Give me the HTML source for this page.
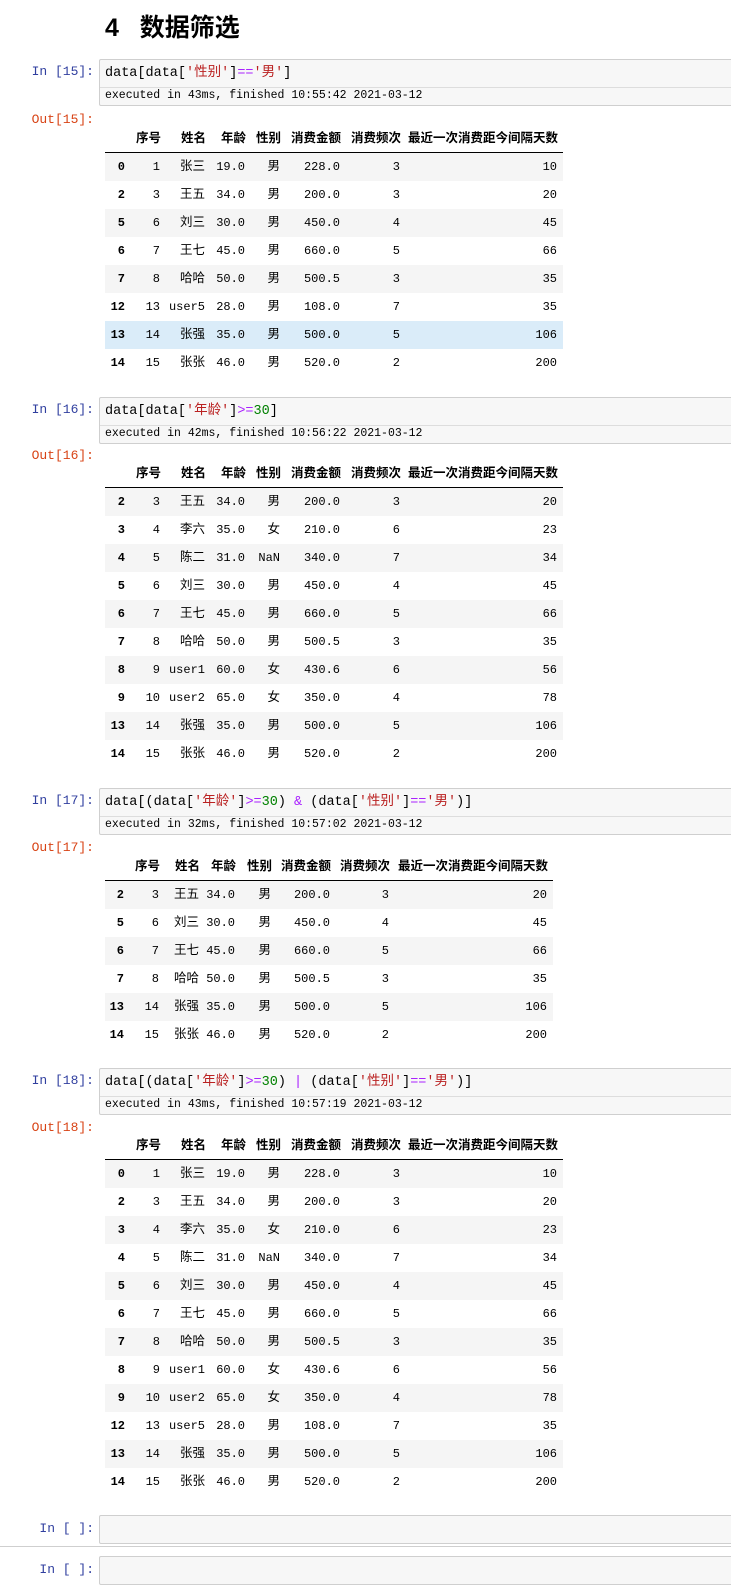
<!DOCTYPE html>
<html><head><meta charset="utf-8"><style>
body{margin:0;width:731px;height:1571px;background:#fff;position:relative;overflow:hidden;font-family:"Liberation Sans","Noto Sans CJK SC",sans-serif;}
.h{position:absolute;left:105px;top:8px;font-size:25px;font-weight:bold;color:#000;font-family:"Liberation Sans","Noto Sans CJK SC",sans-serif;}
.lab{position:absolute;left:0;width:94px;text-align:right;font-family:"Liberation Mono","Noto Sans CJK SC",monospace;font-size:13px;}
.in{color:#303f9f}.out{color:#d84315}
.box{position:absolute;left:99px;width:640px;border:1px solid #cfcfcf;background:#f7f7f7;border-radius:2px;}
.code{height:27px;line-height:27px;padding-left:5px;font-family:"Liberation Mono","Noto Sans CJK SC",monospace;font-size:13.5px;color:#000;border-bottom:1px solid #ddd;white-space:pre}
.ex{height:17px;line-height:16px;padding-left:5px;font-family:"Liberation Mono",monospace;font-size:11.5px;color:#000;white-space:pre}
.s{color:#ba2121}.o{color:#aa22ff}.n{color:#008000}
table{position:absolute;left:105px;border-collapse:collapse;table-layout:fixed;font-size:12px;}
th{height:28px;line-height:16px;font-weight:bold;text-align:right;padding:0 5px 0 0;border-bottom:1px solid #000;white-space:nowrap;font-size:12.5px;vertical-align:middle;overflow:visible}
td{height:28px;line-height:16px;text-align:right;padding:0 6px 0 0;font-family:"Liberation Mono","Noto Sans CJK SC",monospace;font-size:12px;white-space:nowrap;vertical-align:middle}
td.c{font-family:"Noto Sans CJK SC",sans-serif;font-size:12.5px;line-height:16px;padding-bottom:5px;box-sizing:border-box}
td.i{font-weight:bold}
tr.z td{background:#f5f5f5}
tr.hl td{background:#daecf9}
.sep{position:absolute;left:0;width:731px;top:1546px;height:1px;background:#cfcfcf}
</style></head><body>
<div class="h">4&nbsp;&nbsp;&nbsp;数据筛选</div>

<div class="lab in" style="top:64px">In [15]:</div>
<div class="box" style="top:59px"><div class="code">data[data[<span class="s">'性别'</span>]<span class="o">==</span><span class="s">'男'</span>]</div><div class="ex">executed in 43ms, finished 10:55:42 2021-03-12</div></div>
<div class="lab out" style="top:112px">Out[15]:</div>
<table style="top:124px"><colgroup><col style="width:26px"><col style="width:35px"><col style="width:45px"><col style="width:40px"><col style="width:35px"><col style="width:60px"><col style="width:60px"><col style="width:157px"></colgroup>
<tr><th></th><th>序号</th><th>姓名</th><th>年龄</th><th>性别</th><th>消费金额</th><th>消费频次</th><th>最近一次消费距今间隔天数</th></tr>
<tr class="z"><td class="i">0</td><td>1</td><td class="c">张三</td><td>19.0</td><td class="c">男</td><td>228.0</td><td>3</td><td>10</td></tr>
<tr><td class="i">2</td><td>3</td><td class="c">王五</td><td>34.0</td><td class="c">男</td><td>200.0</td><td>3</td><td>20</td></tr>
<tr class="z"><td class="i">5</td><td>6</td><td class="c">刘三</td><td>30.0</td><td class="c">男</td><td>450.0</td><td>4</td><td>45</td></tr>
<tr><td class="i">6</td><td>7</td><td class="c">王七</td><td>45.0</td><td class="c">男</td><td>660.0</td><td>5</td><td>66</td></tr>
<tr class="z"><td class="i">7</td><td>8</td><td class="c">哈哈</td><td>50.0</td><td class="c">男</td><td>500.5</td><td>3</td><td>35</td></tr>
<tr><td class="i">12</td><td>13</td><td>user5</td><td>28.0</td><td class="c">男</td><td>108.0</td><td>7</td><td>35</td></tr>
<tr class="hl"><td class="i">13</td><td>14</td><td class="c">张强</td><td>35.0</td><td class="c">男</td><td>500.0</td><td>5</td><td>106</td></tr>
<tr><td class="i">14</td><td>15</td><td class="c">张张</td><td>46.0</td><td class="c">男</td><td>520.0</td><td>2</td><td>200</td></tr>
</table>

<div class="lab in" style="top:402px">In [16]:</div>
<div class="box" style="top:397px"><div class="code">data[data[<span class="s">'年龄'</span>]<span class="o">&gt;=</span><span class="n">30</span>]</div><div class="ex">executed in 42ms, finished 10:56:22 2021-03-12</div></div>
<div class="lab out" style="top:448px">Out[16]:</div>
<table style="top:459px"><colgroup><col style="width:26px"><col style="width:35px"><col style="width:45px"><col style="width:40px"><col style="width:35px"><col style="width:60px"><col style="width:60px"><col style="width:157px"></colgroup>
<tr><th></th><th>序号</th><th>姓名</th><th>年龄</th><th>性别</th><th>消费金额</th><th>消费频次</th><th>最近一次消费距今间隔天数</th></tr>
<tr class="z"><td class="i">2</td><td>3</td><td class="c">王五</td><td>34.0</td><td class="c">男</td><td>200.0</td><td>3</td><td>20</td></tr>
<tr><td class="i">3</td><td>4</td><td class="c">李六</td><td>35.0</td><td class="c">女</td><td>210.0</td><td>6</td><td>23</td></tr>
<tr class="z"><td class="i">4</td><td>5</td><td class="c">陈二</td><td>31.0</td><td>NaN</td><td>340.0</td><td>7</td><td>34</td></tr>
<tr><td class="i">5</td><td>6</td><td class="c">刘三</td><td>30.0</td><td class="c">男</td><td>450.0</td><td>4</td><td>45</td></tr>
<tr class="z"><td class="i">6</td><td>7</td><td class="c">王七</td><td>45.0</td><td class="c">男</td><td>660.0</td><td>5</td><td>66</td></tr>
<tr><td class="i">7</td><td>8</td><td class="c">哈哈</td><td>50.0</td><td class="c">男</td><td>500.5</td><td>3</td><td>35</td></tr>
<tr class="z"><td class="i">8</td><td>9</td><td>user1</td><td>60.0</td><td class="c">女</td><td>430.6</td><td>6</td><td>56</td></tr>
<tr><td class="i">9</td><td>10</td><td>user2</td><td>65.0</td><td class="c">女</td><td>350.0</td><td>4</td><td>78</td></tr>
<tr class="z"><td class="i">13</td><td>14</td><td class="c">张强</td><td>35.0</td><td class="c">男</td><td>500.0</td><td>5</td><td>106</td></tr>
<tr><td class="i">14</td><td>15</td><td class="c">张张</td><td>46.0</td><td class="c">男</td><td>520.0</td><td>2</td><td>200</td></tr>
</table>

<div class="lab in" style="top:793px">In [17]:</div>
<div class="box" style="top:788px"><div class="code">data[(data[<span class="s">'年龄'</span>]<span class="o">&gt;=</span><span class="n">30</span>) <span class="o">&amp;</span> (data[<span class="s">'性别'</span>]<span class="o">==</span><span class="s">'男'</span>)]</div><div class="ex">executed in 32ms, finished 10:57:02 2021-03-12</div></div>
<div class="lab out" style="top:840px">Out[17]:</div>
<table style="top:852px"><colgroup><col style="width:25px"><col style="width:35px"><col style="width:40px"><col style="width:36px"><col style="width:36px"><col style="width:59px"><col style="width:59px"><col style="width:158px"></colgroup>
<tr><th></th><th>序号</th><th>姓名</th><th>年龄</th><th>性别</th><th>消费金额</th><th>消费频次</th><th>最近一次消费距今间隔天数</th></tr>
<tr class="z"><td class="i">2</td><td>3</td><td class="c">王五</td><td>34.0</td><td class="c">男</td><td>200.0</td><td>3</td><td>20</td></tr>
<tr><td class="i">5</td><td>6</td><td class="c">刘三</td><td>30.0</td><td class="c">男</td><td>450.0</td><td>4</td><td>45</td></tr>
<tr class="z"><td class="i">6</td><td>7</td><td class="c">王七</td><td>45.0</td><td class="c">男</td><td>660.0</td><td>5</td><td>66</td></tr>
<tr><td class="i">7</td><td>8</td><td class="c">哈哈</td><td>50.0</td><td class="c">男</td><td>500.5</td><td>3</td><td>35</td></tr>
<tr class="z"><td class="i">13</td><td>14</td><td class="c">张强</td><td>35.0</td><td class="c">男</td><td>500.0</td><td>5</td><td>106</td></tr>
<tr><td class="i">14</td><td>15</td><td class="c">张张</td><td>46.0</td><td class="c">男</td><td>520.0</td><td>2</td><td>200</td></tr>
</table>

<div class="lab in" style="top:1073px">In [18]:</div>
<div class="box" style="top:1068px"><div class="code">data[(data[<span class="s">'年龄'</span>]<span class="o">&gt;=</span><span class="n">30</span>) <span class="o">|</span> (data[<span class="s">'性别'</span>]<span class="o">==</span><span class="s">'男'</span>)]</div><div class="ex">executed in 43ms, finished 10:57:19 2021-03-12</div></div>
<div class="lab out" style="top:1120px">Out[18]:</div>
<table style="top:1131px"><colgroup><col style="width:26px"><col style="width:35px"><col style="width:45px"><col style="width:40px"><col style="width:35px"><col style="width:60px"><col style="width:60px"><col style="width:157px"></colgroup>
<tr><th></th><th>序号</th><th>姓名</th><th>年龄</th><th>性别</th><th>消费金额</th><th>消费频次</th><th>最近一次消费距今间隔天数</th></tr>
<tr class="z"><td class="i">0</td><td>1</td><td class="c">张三</td><td>19.0</td><td class="c">男</td><td>228.0</td><td>3</td><td>10</td></tr>
<tr><td class="i">2</td><td>3</td><td class="c">王五</td><td>34.0</td><td class="c">男</td><td>200.0</td><td>3</td><td>20</td></tr>
<tr class="z"><td class="i">3</td><td>4</td><td class="c">李六</td><td>35.0</td><td class="c">女</td><td>210.0</td><td>6</td><td>23</td></tr>
<tr><td class="i">4</td><td>5</td><td class="c">陈二</td><td>31.0</td><td>NaN</td><td>340.0</td><td>7</td><td>34</td></tr>
<tr class="z"><td class="i">5</td><td>6</td><td class="c">刘三</td><td>30.0</td><td class="c">男</td><td>450.0</td><td>4</td><td>45</td></tr>
<tr><td class="i">6</td><td>7</td><td class="c">王七</td><td>45.0</td><td class="c">男</td><td>660.0</td><td>5</td><td>66</td></tr>
<tr class="z"><td class="i">7</td><td>8</td><td class="c">哈哈</td><td>50.0</td><td class="c">男</td><td>500.5</td><td>3</td><td>35</td></tr>
<tr><td class="i">8</td><td>9</td><td>user1</td><td>60.0</td><td class="c">女</td><td>430.6</td><td>6</td><td>56</td></tr>
<tr class="z"><td class="i">9</td><td>10</td><td>user2</td><td>65.0</td><td class="c">女</td><td>350.0</td><td>4</td><td>78</td></tr>
<tr><td class="i">12</td><td>13</td><td>user5</td><td>28.0</td><td class="c">男</td><td>108.0</td><td>7</td><td>35</td></tr>
<tr class="z"><td class="i">13</td><td>14</td><td class="c">张强</td><td>35.0</td><td class="c">男</td><td>500.0</td><td>5</td><td>106</td></tr>
<tr><td class="i">14</td><td>15</td><td class="c">张张</td><td>46.0</td><td class="c">男</td><td>520.0</td><td>2</td><td>200</td></tr>
</table>

<div class="lab in" style="top:1521px">In [ ]:</div>
<div class="box" style="top:1515px;height:27px"></div>
<div class="sep"></div>
<div class="lab in" style="top:1562px">In [ ]:</div>
<div class="box" style="top:1556px;height:27px"></div>
</body></html>
